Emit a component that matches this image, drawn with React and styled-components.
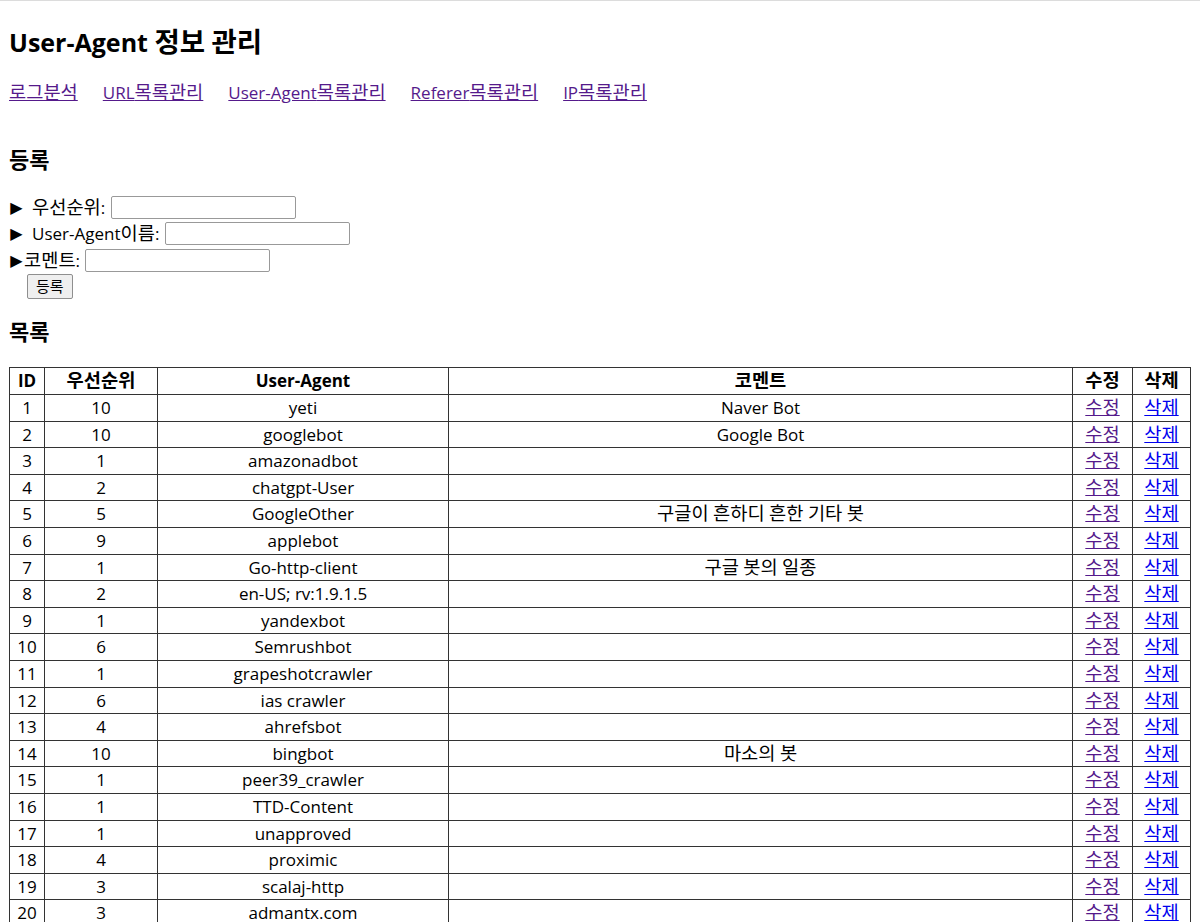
import React from "react";
import styled, { createGlobalStyle } from "styled-components";

const GlobalStyle = createGlobalStyle`
  html {
    border-top: 1px solid #dcdcdc;
  }
  body {
    margin: 9px;
    color: #000;
    background: #fff;
    font-family: "Open Sans", "Noto Sans CJK KR", sans-serif;
    font-size: 17px;
  }
`;

const agents = [
  { id: 1, rank: 10, name: "yeti", comment: "Naver Bot" },
  { id: 2, rank: 10, name: "googlebot", comment: "Google Bot" },
  { id: 3, rank: 1, name: "amazonadbot", comment: "" },
  { id: 4, rank: 2, name: "chatgpt-User", comment: "" },
  { id: 5, rank: 5, name: "GoogleOther", comment: "구글이 흔하디 흔한 기타 봇" },
  { id: 6, rank: 9, name: "applebot", comment: "" },
  { id: 7, rank: 1, name: "Go-http-client", comment: "구글 봇의 일종" },
  { id: 8, rank: 2, name: "en-US; rv:1.9.1.5", comment: "" },
  { id: 9, rank: 1, name: "yandexbot", comment: "" },
  { id: 10, rank: 6, name: "Semrushbot", comment: "" },
  { id: 11, rank: 1, name: "grapeshotcrawler", comment: "" },
  { id: 12, rank: 6, name: "ias crawler", comment: "" },
  { id: 13, rank: 4, name: "ahrefsbot", comment: "" },
  { id: 14, rank: 10, name: "bingbot", comment: "마소의 봇" },
  { id: 15, rank: 1, name: "peer39_crawler", comment: "" },
  { id: 16, rank: 1, name: "TTD-Content", comment: "" },
  { id: 17, rank: 1, name: "unapproved", comment: "" },
  { id: 18, rank: 4, name: "proximic", comment: "" },
  { id: 19, rank: 3, name: "scalaj-http", comment: "" },
  { id: 20, rank: 3, name: "admantx.com", comment: "" },
];

const menus = ["로그분석", "URL목록관리", "User-Agent목록관리", "Referer목록관리", "IP목록관리"];

// hangul glyphs run a bit wider in the original font, so bump their size
const Ko = styled.span`
  font-size: 1.1em;
  line-height: 1;
`;

const K = ({ children }) =>
  String(children)
    .split(/([가-힣]+)/)
    .map((part, i) => (/[가-힣]/.test(part) ? <Ko key={i}>{part}</Ko> : part));

const App = () => {
  return (
    <div>
      <GlobalStyle />
      <Title>
        <K>User-Agent 정보 관리</K>
      </Title>

      <Nav>
        {menus.map((m) => (
          <Link key={m} href="#" $visited>
            <K>{m}</K>
          </Link>
        ))}
      </Nav>

      <SubTitle>
        <K>등록</K>
      </SubTitle>
      <Form onSubmit={(e) => e.preventDefault()}>
        <Row>
          <Arrow $spaced>▶</Arrow>
          <K>우선순위:</K>&nbsp;<Input type="text" />
        </Row>
        <Row>
          <Arrow $spaced>▶</Arrow>
          <K>User-Agent이름:</K>&nbsp;<Input type="text" />
        </Row>
        <Row>
          <Arrow>▶</Arrow>
          <K>코멘트:</K>&nbsp;<Input type="text" />
        </Row>
        <ButtonRow>
          <Button type="submit">등록</Button>
        </ButtonRow>
      </Form>

      <SubTitle $list>
        <K>목록</K>
      </SubTitle>
      <Table>
        <colgroup>
          <col style={{ width: 35 }} />
          <col style={{ width: 113 }} />
          <col style={{ width: 291 }} />
          <col />
          <col style={{ width: 60 }} />
          <col style={{ width: 58 }} />
        </colgroup>
        <thead>
          <tr>
            <Th>ID</Th>
            <Th>
              <K>우선순위</K>
            </Th>
            <Th>User-Agent</Th>
            <Th>
              <K>코멘트</K>
            </Th>
            <Th>
              <K>수정</K>
            </Th>
            <Th>
              <K>삭제</K>
            </Th>
          </tr>
        </thead>
        <tbody>
          {agents.map((a) => (
            <tr key={a.id}>
              <Td>{a.id}</Td>
              <Td>{a.rank}</Td>
              <Td>{a.name}</Td>
              <Td>
                <K>{a.comment}</K>
              </Td>
              <Td>
                <Link href="#" $visited>
                  <K>수정</K>
                </Link>
              </Td>
              <Td>
                <Link href="#">
                  <K>삭제</K>
                </Link>
              </Td>
            </tr>
          ))}
        </tbody>
      </Table>
    </div>
  );
};

const Title = styled.h2`
  margin: 14px 0 21px;
  font-size: 25px;
  font-weight: bold;
  line-height: 36px;
`;

const Nav = styled.div`
  display: flex;
  gap: 25px;
  line-height: 24px;
`;

const Link = styled.a`
  color: ${(p) => (p.$visited ? "#551a8b" : "#0000ee")};
  text-decoration: underline;
`;

const SubTitle = styled.h3`
  margin: ${(p) => (p.$list ? "19px 0 20px" : "42px 0 19px")};
  font-size: 20px;
  font-weight: bold;
  line-height: 28px;
`;

const Form = styled.form`
  margin: 0;
`;

const Row = styled.div`
  display: flex;
  align-items: center;
  height: 26.5px;
  white-space: pre;
`;

const Arrow = styled.span`
  display: inline-block;
  width: 15px;
  margin-right: ${(p) => (p.$spaced ? "8px" : "0")};
  font-family: "DejaVu Sans", sans-serif;
  font-size: 16px;
  text-align: center;
`;

const Input = styled.input`
  box-sizing: border-box;
  width: 185px;
  height: 23px;
  margin: 0 0 0 1px;
  padding: 1px 2px;
  border: 1px solid #999;
  border-radius: 2px;
  font-size: 14px;
`;

const ButtonRow = styled.div`
  padding: 0 0 0 18px;
  height: 26px;
`;

const Button = styled.button`
  height: 25px;
  padding: 0 8px;
  border: 1px solid #8f8f8f;
  border-radius: 2px;
  background: #efefef;
  color: #000;
  font-family: "Noto Sans CJK KR", sans-serif;
  font-size: 15px;
  line-height: 20px;
`;

const Table = styled.table`
  width: 100%;
  table-layout: fixed;
  border-collapse: collapse;
  border: 1px solid #333;
`;

const Th = styled.th`
  border: 1px solid #333;
  padding: 1px;
  font-weight: bold;
  line-height: 24.5px;
  text-align: center;
`;

const Td = styled.td`
  border: 1px solid #333;
  padding: 1px;
  line-height: 23.6px;
  text-align: center;
  white-space: nowrap;
`;

export default App;
